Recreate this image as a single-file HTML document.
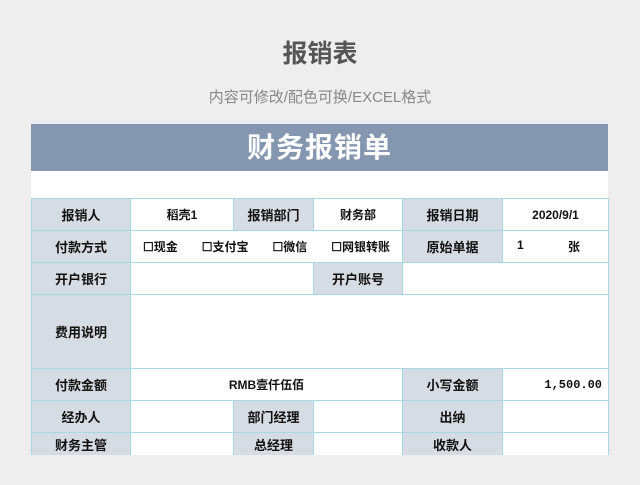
<!DOCTYPE html>
<html><head><meta charset="utf-8"><style>
body{margin:0;width:640px;height:485px;background:#eeeeee;font-family:"Liberation Sans","Noto Sans CJK SC",sans-serif;position:relative;overflow:hidden}
.t{position:absolute;left:0;width:640px;text-align:center}
.sheet{position:absolute;left:31px;top:124px;width:577px;height:331px;background:#fff;overflow:hidden}
.hd{position:absolute;left:0;top:0;width:577px;height:47px;background:#8496b0;color:#fff;font-size:28px;font-weight:bold;text-align:center;line-height:47px;letter-spacing:1px}
.c{position:absolute;box-sizing:border-box;border:1px solid #a9d8e4;display:flex;align-items:center;justify-content:center;font-size:12px;color:#111;font-weight:bold}
.l{background:#d6dce4;font-size:13px}
</style></head><body>
<div class="t" style="top:34px;font-size:25px;color:#555;font-weight:bold">报销表</div>
<div class="t" style="top:86px;font-size:15px;color:#888">内容可修改/配色可换/EXCEL格式</div>
<div class="sheet">
<div class="hd">财务报销单</div>
</div>
<div id="g"></div>
<script>
var X=[31,130,233,313,402,502,608],Y=[198,230,262,294,368,400,432,464];
var cells=[
[0,0,1,"报销人",1],[0,1,2,"稻壳1",0],[0,2,3,"报销部门",1],[0,3,4,"财务部",0],[0,4,5,"报销日期",1],[0,5,6,"2020/9/1",0],
[1,0,1,"付款方式",1],[1,1,4,"PAY",0],[1,4,5,"原始单据",1],[1,5,6,"ONE",0],
[2,0,1,"开户银行",1],[2,1,3,"",0],[2,3,4,"开户账号",1],[2,4,6,"",0],
[3,0,1,"费用说明",1],[3,1,6,"",0],
[4,0,1,"付款金额",1],[4,1,4,"RMB壹仟伍佰",0],[4,4,5,"小写金额",1],[4,5,6,"AMT",0],
[5,0,1,"经办人",1],[5,1,2,"",0],[5,2,3,"部门经理",1],[5,3,4,"",0],[5,4,5,"出纳",1],[5,5,6,"",0],
[6,0,1,"财务主管",1],[6,1,2,"",0],[6,2,3,"总经理",1],[6,3,4,"",0],[6,4,5,"收款人",1],[6,5,6,"",0]];
var h="";
cells.forEach(function(c){var r=c[0],top=Y[r];
var inner=c[3];
if(inner=="PAY")inner='<span style="display:flex;width:100%;justify-content:space-around;font-size:12px">☐现金<span>☐支付宝</span><span>☐微信</span><span>☐网银转账</span></span>';
if(inner=="ONE")inner='<span style="display:flex;width:100%;justify-content:space-between;padding:0 28px 0 14px">1<span>张</span></span>';
if(inner=="AMT")inner='<span style="width:100%;text-align:right;padding-right:6px;font-family:\'Liberation Mono\',monospace;font-size:12px">1,500.00</span>';
h+='<div class="c'+(c[4]?' l':'')+'" style="left:'+X[c[1]]+'px;top:'+top+'px;width:'+(X[c[2]]-X[c[1]]+1)+'px;height:'+(Math.min(Y[r+1],455)-top+1)+'px">'+inner+'</div>';});
document.getElementById("g").innerHTML=h;
</script>
<div style="position:absolute;left:0;top:455px;width:640px;height:30px;background:#eeeeee"></div>
</body></html>
